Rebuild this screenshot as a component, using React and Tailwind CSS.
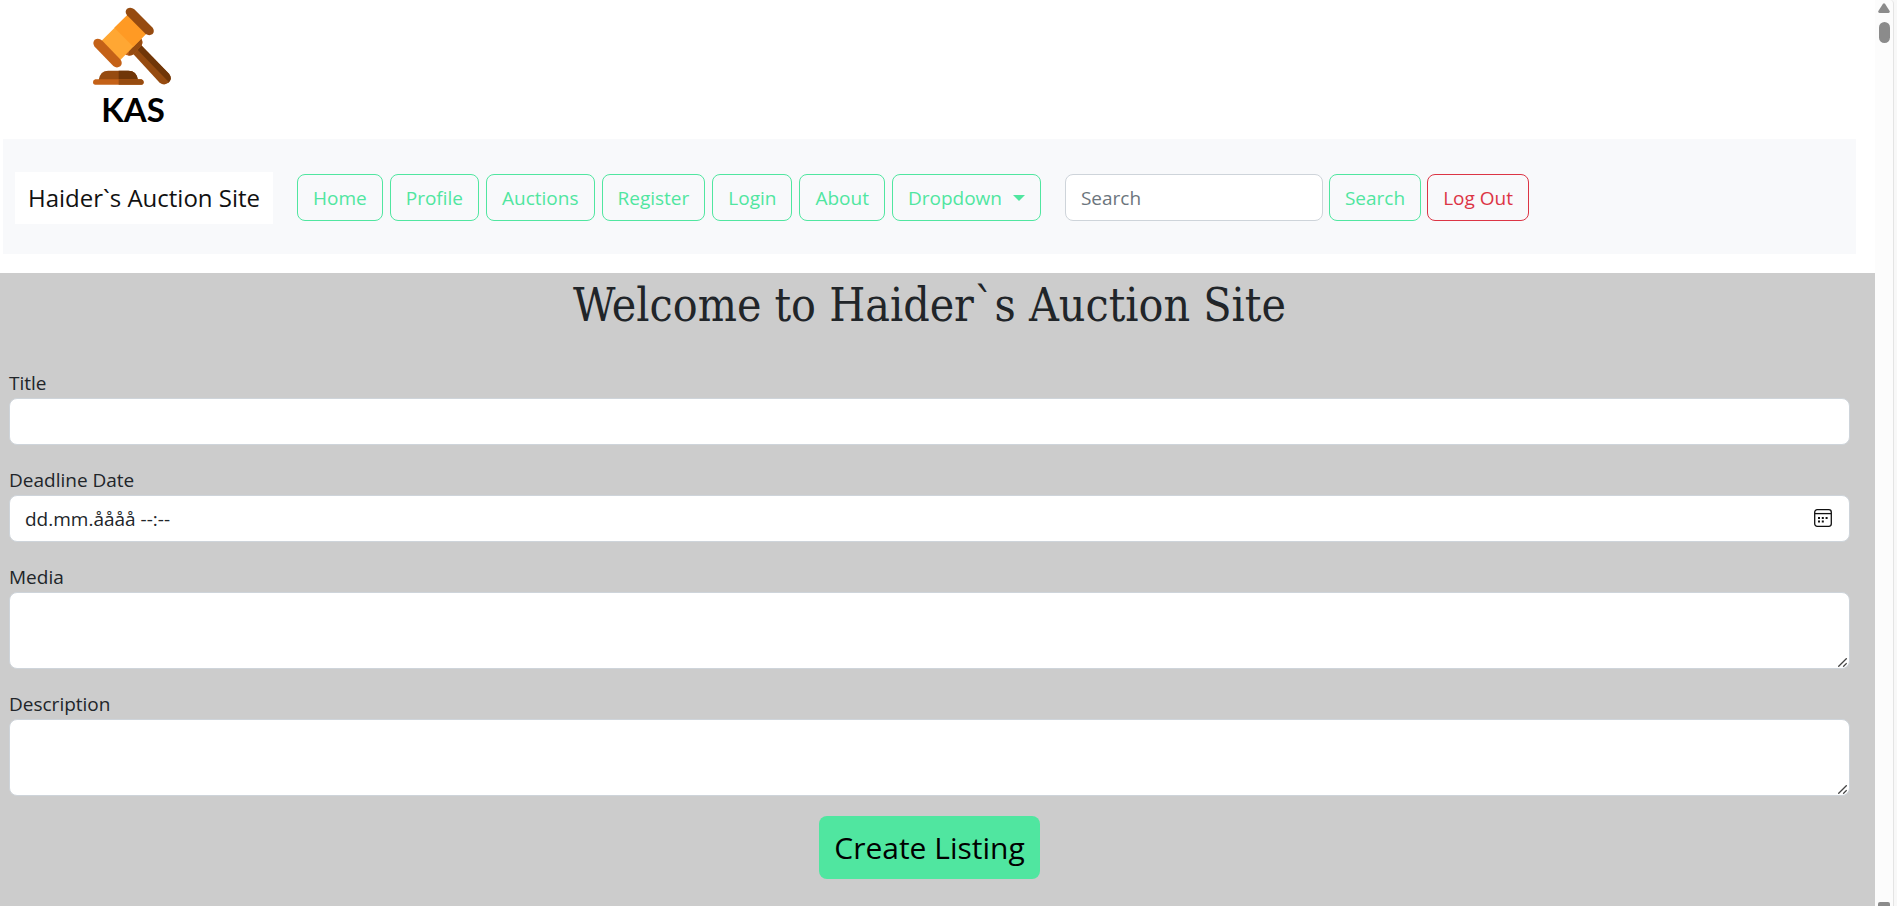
const navItems = ["Home", "Profile", "Auctions", "Register", "Login", "About"];

const buttonBase =
  "h-[47px] shrink-0 rounded-lg border px-[15px] text-[19px] leading-7 whitespace-nowrap";
const greenButton = buttonBase + " border-[#50e6a0] text-[#50e6a0]";
const field =
  "block w-full rounded-lg border border-[#ced4da] bg-white px-[15px] text-[19px] text-[#212529] outline-none";
const label = "block text-[19px] leading-[30px]";

function Gavel() {
  return (
    <svg className="h-[78px] w-[80px]" viewBox="40 22 240 234" aria-hidden="true">
      <path d="M160 162 L184 136 L268 222 Q279 236 268 248 Q254 260 240 249 Z" fill="#964b10" />
      <path d="M172 149 L184 136 L268 222 Q279 236 268 248 Z" fill="#703608" />
      <path d="M135 164 Q150 172 163 163 L186 137 Q193 126 181 112 Z" fill="#c46117" />
      <path d="M146 168 Q156 168 163 163 L186 137 Q193 126 181 112 L150 143 Z" fill="#964b10" />
      <path d="M65 124 L144 45 L201 101 L122 181 Z" fill="#ffa733" />
      <path d="M104 84 L144 45 L201 101 L161 141 Z" fill="#ff9a24" />
      <path d="M45 120 Q57 113 68 123 L123 180 Q130 191 122 200 Q111 207 101 199 L45 141 Q37 130 45 120 Z" fill="#c46117" />
      <path d="M142 27 Q154 21 164 29 L219 84 Q226 95 219 103 Q209 110 198 103 L142 47 Q134 36 142 27 Z" fill="#964b10" />
      <path d="M57 241 Q61 213 86 213 H146 Q171 213 175 241 Z" fill="#964b10" />
      <path d="M117 213 H146 Q171 213 175 241 H117 Z" fill="#703608" />
      <path d="M47 239 H185 Q192 241 192 247 Q192 255 185 255 H47 Q40 255 40 247 Q40 241 47 239 Z" fill="#c46117" />
      <path d="M117 239 H185 Q192 241 192 247 Q192 255 185 255 H117 Z" fill="#964b10" />
    </svg>
  );
}

function CalendarIcon() {
  return (
    <svg className="size-[18px]" viewBox="0 0 18 18" fill="none" stroke="#111" strokeWidth="1.3" aria-hidden="true">
      <rect x="0.700" y="0.700" width="16.600" height="16.600" rx="2.500" />
      <path d="M1 4.600h16" />
      <path d="M4 8.900h2M7.800 8.900h2M11.600 8.900h2M4 12.600h2M7.800 12.600h2" strokeWidth="2" />
    </svg>
  );
}

function TextArea({ id, name }) {
  return (
    <div className="mb-5">
      <label htmlFor={id} className={label}>{name}</label>
      <div className="relative">
        <textarea id={id} className={field + " h-[77px] resize-none py-2"} />
        <svg className="pointer-events-none absolute right-[3px] bottom-[2px] size-[9px]" viewBox="0 0 9 9" stroke="#444" strokeWidth="1.3" aria-hidden="true">
          <path d="M0.300 8.700L8.700 0.300M5.200 8.700L8.700 5.200" />
        </svg>
      </div>
    </div>
  );
}

export default function App() {
  return (
    <div className="flex h-screen overflow-hidden bg-white font-['Open_Sans','Noto_Sans',sans-serif] text-[#212529]">
      <div className="flex min-w-0 flex-1 flex-col">
        <header className="pr-[19px] pb-[19px] pl-[3px]">
          <a href="#home" className="ml-[90px] flex h-[139px] w-[80px] flex-col pt-[7px] text-black">
            <Gavel />
            <span className="text-center font-['Lato',sans-serif] text-[33px] leading-[48px] font-bold">KAS</span>
          </a>
          <nav className="flex h-[115px] items-center bg-[#f8f9fb] px-3 pt-[2px]">
            <a href="#home" className="mr-6 flex h-[52px] shrink-0 items-center bg-white px-[13px] text-2xl whitespace-nowrap text-[#111]">
              Haider`s Auction Site
            </a>
            <div className="flex gap-[7px]">
              {navItems.map((item) => (
                <button key={item} type="button" className={greenButton}>{item}</button>
              ))}
              <button type="button" className={greenButton + " flex items-center gap-[11px]"}>
                Dropdown
                <svg className="h-[6px] w-[12px]" viewBox="0 0 12 6" aria-hidden="true">
                  <path d="M0 0H12L6 6Z" fill="#50e6a0" />
                </svg>
              </button>
            </div>
            <form className="ml-6 flex gap-[6px]" onSubmit={(e) => e.preventDefault()}>
              <input type="search" aria-label="Search" placeholder="Search" className="h-[47px] w-[258px] rounded-lg border border-[#ced4da] bg-white px-[15px] text-[19px] outline-none placeholder:text-[#6c757d]" />
              <button type="submit" className={greenButton}>Search</button>
              <button type="button" className={buttonBase + " border-[#dc3545] text-[#dc3545]"}>Log Out</button>
            </form>
          </nav>
        </header>
        <main className="flex-1 bg-[#ccc] pr-[25px] pl-[9px]">
          <h1 className="h-[95px] pt-1 text-center font-['DejaVu_Serif_Condensed','DejaVu_Serif',serif] text-[46px] leading-[56px] whitespace-nowrap">
            Welcome to Haider`s Auction Site
          </h1>
          <form onSubmit={(e) => e.preventDefault()}>
            <div className="mb-5">
              <label htmlFor="title" className={label}>Title</label>
              <input id="title" type="text" className={field + " h-[47px]"} />
            </div>
            <div className="mb-5">
              <label htmlFor="deadline" className={label}>Deadline Date</label>
              <div className="relative">
                <input id="deadline" type="text" defaultValue="dd.mm.åååå --:--" className={field + " h-[47px]"} />
                <button type="button" aria-label="Open calendar" className="absolute top-[14px] right-[18px]">
                  <CalendarIcon />
                </button>
              </div>
            </div>
            <TextArea id="media" name="Media" />
            <TextArea id="description" name="Description" />
            <div className="flex justify-center">
              <button type="submit" className="h-[63px] rounded-lg bg-[#50e6a0] px-[15px] text-3xl text-black">Create Listing</button>
            </div>
          </form>
        </main>
      </div>
      <div className="flex w-[22px] shrink-0 bg-[#f8f8f8]" aria-hidden="true">
        <div className="flex w-[19px] flex-col items-center justify-between rounded-tr border-r border-[#e4e4e4] bg-[#fcfcfc] pt-[3px]">
          <div className="flex flex-col items-center gap-[9px]">
            <svg className="h-[10px] w-[12px]" viewBox="0 0 12 10">
              <path d="M5 0.800Q6 -0.500 7 0.800L11.800 8.200Q12 10 10.500 10H1.500Q0 10 0.200 8.200Z" fill="#8b8b8b" />
            </svg>
            <div className="h-[21px] w-[11px] rounded-full bg-[#8b8b8b]" />
          </div>
          <div className="h-1 w-3 rounded-t-xs bg-[#8b8b8b]" />
        </div>
      </div>
    </div>
  );
}
